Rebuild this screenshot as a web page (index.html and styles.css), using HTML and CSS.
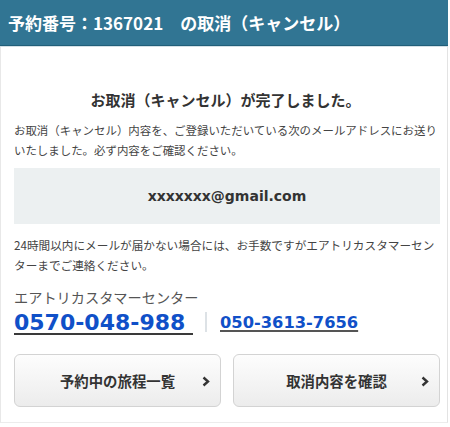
FILE: index.html
```html
<!DOCTYPE html>
<html lang="ja">
<head>
<meta charset="utf-8">
<link rel="stylesheet" href="styles.css">
</head>
<body>
<div class="panel">
  <div class="header">予約番号：1367021　の取消（キャンセル）</div>
  <div class="content">
    <h1 class="title">お取消（キャンセル）が完了しました。</h1>
    <p class="note">お取消（キャンセル）内容を、ご登録いただいている次のメールアドレスにお送りいたしました。必ず内容をご確認ください。</p>
    <div class="mailbox">xxxxxxx@gmail.com</div>
    <p class="note note2">24時間以内にメールが届かない場合には、お手数ですがエアトリカスタマーセンターまでご連絡ください。</p>
    <div class="cs-label">エアトリカスタマーセンター</div>
    <div class="phones">
      <a class="tel-main" href="#">0570-048-988 </a>
      <span class="sep"></span>
      <a class="tel-sub" href="#">050-3613-7656</a>
    </div>
    <div class="buttons">
      <a class="btn" href="#"><span>予約中の旅程一覧</span>
        <svg class="chev" width="8" height="11" viewBox="0 0 8 11"><polyline points="1.5,1.5 6,5.5 1.5,9.5" fill="none" stroke="#333" stroke-width="2.4"/></svg></a>
      <a class="btn" href="#"><span>取消内容を確認</span>
        <svg class="chev" width="8" height="11" viewBox="0 0 8 11"><polyline points="1.5,1.5 6,5.5 1.5,9.5" fill="none" stroke="#333" stroke-width="2.4"/></svg></a>
    </div>
  </div>
</div>
</body>
</html>
```
FILE: styles.css
```css
html, body {
  margin: 0;
  padding: 0;
  background: #fff;
}
body {
  font-family: "Noto Sans CJK JP", "Noto Sans", sans-serif;
  color: #333;
}
.panel {
  width: 446px;
  border-left: 1px solid #e8e8e8;
  border-right: 1px solid #e3e3e3;
  border-bottom: 1px solid #ececec;
}
.header {
  height: 45px;
  background: #317593;
  border-bottom: 1px solid #215f79;
  box-shadow: 0 1px 0 #d4e0e6;
  color: #fff;
  font-weight: bold;
  font-size: 17px;
  line-height: 45px;
  padding-left: 8px;
  margin-left: -1px;
  margin-right: -1px;
  white-space: nowrap;
}
.content {
  padding: 43px 7px 15px 13px;
}
.title {
  margin: 0;
  font-size: 15px;
  line-height: 22px;
  font-weight: bold;
  text-align: center;
  color: #333;
  padding-right: 3px;
}
.note {
  margin: 10px 0 0;
  font-size: 11.45px;
  line-height: 19.5px;
  color: #444;
}
.mailbox {
  margin-top: 8px;
  height: 56px;
  background: #ecf0f1;
  display: flex;
  align-items: center;
  justify-content: center;
  font-family: "DejaVu Sans", "Noto Sans CJK JP", sans-serif;
  font-weight: bold;
  font-size: 14px;
  color: #333;
}
.note2 {
  margin-top: 11px;
  font-size: 11.65px;
}
.cs-label {
  margin-top: 13px;
  font-size: 14.2px;
  line-height: 20px;
  color: #555;
}
.phones {
  display: flex;
  align-items: center;
  height: 28px;
  margin-top: 1px;
}
.tel-main {
  font-family: "DejaVu Sans", sans-serif;
  font-weight: bold;
  font-size: 22px;
  color: #1050c8;
  text-decoration: underline;
  text-decoration-color: #3a3a3a;
  text-decoration-thickness: 2px;
  text-underline-offset: 3px;
  white-space: pre;
}
.sep {
  width: 2px;
  height: 20px;
  background: #dde2e6;
  margin-left: 12px;
  margin-right: 13px;
}
.tel-sub {
  font-family: "DejaVu Sans", sans-serif;
  font-weight: bold;
  font-size: 16.3px;
  color: #1050c8;
  text-decoration: underline;
  text-decoration-color: #555;
  text-decoration-thickness: 2px;
  text-underline-offset: 2px;
}
.buttons {
  display: grid;
  grid-template-columns: 1fr 1fr;
  gap: 12px;
  margin-top: 18px;
}
.btn {
  position: relative;
  height: 51px;
  border: 1px solid #d3d3d3;
  border-radius: 6px;
  background: linear-gradient(#fdfdfd, #ececec);
  display: flex;
  align-items: center;
  justify-content: center;
  text-decoration: none;
  color: #333;
  font-weight: bold;
  font-size: 14.4px;
}
.chev {
  position: absolute;
  right: 10px;
  top: 21px;
}
```
